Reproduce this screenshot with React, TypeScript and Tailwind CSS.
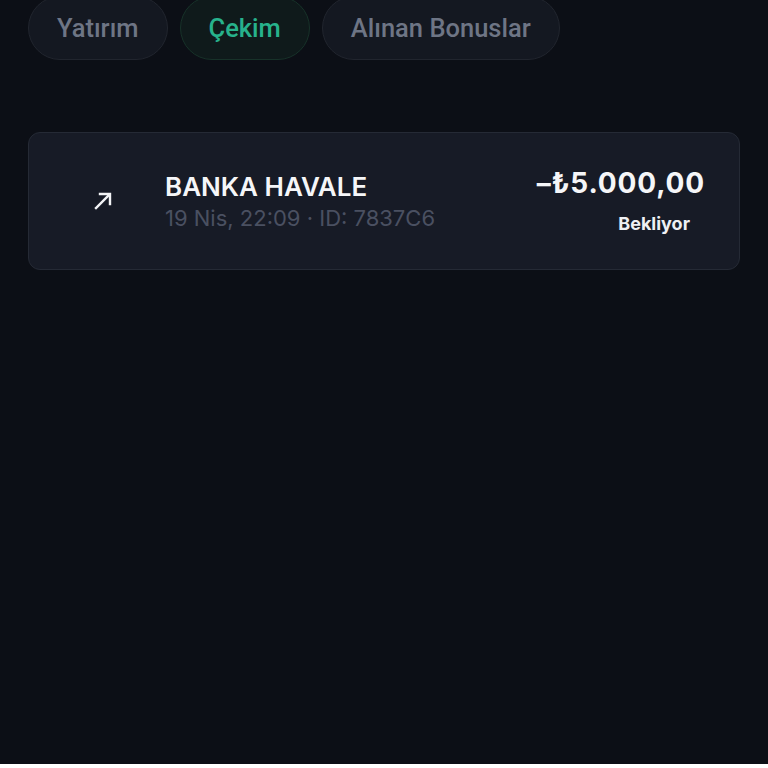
import React from 'react';

const tabs = [
  { label: 'Yatırım', active: false },
  { label: 'Çekim', active: true },
  { label: 'Alınan Bonuslar', active: false },
];

const ArrowUpRight = () => (
  <svg width="24" height="24" viewBox="0 0 24 24" fill="none" stroke="#f3f4f6" strokeWidth="2.4" strokeLinecap="square">
    <path d="M5 19 L18 6" />
    <path d="M9 5 H19 V15" />
  </svg>
);

export default function App() {
  return (
    <div className="min-h-[768px] w-full bg-[#0c0f16] px-[28px]" style={{ fontFamily: 'Inter, "Noto Sans", sans-serif' }}>
      {/* tabs */}
      <div className="-mt-1 flex gap-3" style={{ fontFamily: 'Roboto, "Noto Sans", sans-serif' }}>
        {tabs.map((t) => (
          <button
            key={t.label}
            className={`h-[64px] rounded-full border px-[28px] text-[25.5px] font-medium ${
              t.active
                ? 'border-[#173229] bg-[#0f1a1b] text-[#27b28c]'
                : 'border-[#21252e] bg-[#141821] text-[#6e7585]'
            }`}
          >
            {t.label}
          </button>
        ))}
      </div>

      {/* transaction list */}
      <div className="mt-[72px] flex flex-col gap-3">
        <div className="flex h-[138px] items-center rounded-[12px] border border-[#252a35] bg-[#171b26] pl-[48px] pr-[34px]">
          <div className="flex w-[52px] items-center justify-center">
            <ArrowUpRight />
          </div>
          <div className="ml-[36px] flex flex-1 flex-col">
            <span className="text-[26px] font-semibold leading-[33px] text-[#f5f6f8]">BANKA HAVALE</span>
            <span className="text-[22px] leading-[30px] text-[#4a5061]">19 Nis, 22:09 · ID: 7837C6</span>
          </div>
          <div className="-mt-[2px] flex flex-col items-end">
            <span className="text-[28px] font-bold leading-[36px] tracking-[0.03em] text-[#f5f6f8]">–₺5.000,00</span>
            <span className="mr-[15px] mt-[11px] text-[18px] font-bold leading-[24px] text-[#eef0f3]">Bekliyor</span>
          </div>
        </div>
      </div>
    </div>
  );
}
